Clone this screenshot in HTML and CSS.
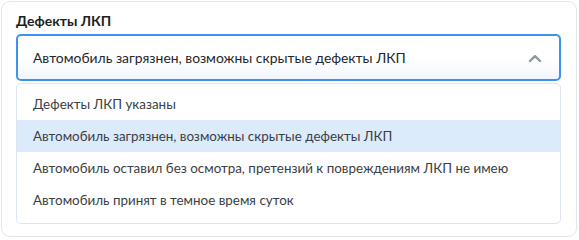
FILE: index.html
```html
<!DOCTYPE html>
<html lang="ru">
<head>
<meta charset="utf-8">
<link rel="stylesheet" href="styles.css">
</head>
<body>
<div class="card">
  <div class="label">Дефекты ЛКП</div>
  <div class="select">
    <span class="value">Автомобиль загрязнен, возможны скрытые дефекты ЛКП</span>
    <svg class="chev" width="14" height="9" viewBox="0 0 14 9"><path d="M2 7 L7 2.2 L12 7" fill="none" stroke="#8d96a5" stroke-width="2.4" stroke-linecap="round" stroke-linejoin="round"/></svg>
  </div>
  <ul class="list">
    <li class="opt">Дефекты ЛКП указаны</li>
    <li class="opt active">Автомобиль загрязнен, возможны скрытые дефекты ЛКП</li>
    <li class="opt">Автомобиль оставил без осмотра, претензий к повреждениям ЛКП не имею</li>
    <li class="opt">Автомобиль принят в темное время суток</li>
  </ul>
</div>
</body>
</html>
```
FILE: styles.css
```css
html, body { margin: 0; padding: 0; background: #fff; }
body { padding: 1px; font-family: "Lato", "Noto Sans", sans-serif; color: #2b2f36; }
.card {
  width: 545px;
  height: 205px;
  border: 1px solid #e3e5e8;
  border-radius: 9px;
  padding: 10px 15px 19px 14px;
}
.label {
  font-size: 14px;
  font-weight: 700;
  color: #1c1f24;
  line-height: 18px;
  height: 22px;
}
.select {
  height: 43px;
  border: 2px solid #3d92f0;
  border-radius: 5px;
  display: flex;
  align-items: center;
  justify-content: space-between;
  padding: 0 17px 0 15px;
  background: linear-gradient(#ffffff 55%, #f1f6fd);
}
.value { font-size: 13.9px; color: #23262c; }
.chev { display: block; margin-top: 1px; }
.list {
  list-style: none;
  margin: 2px 0 0 0;
  padding: 4px 0 7px 0;
  border: 1px solid #dbe4ef;
  border-radius: 5px;
  background: #fff;
}
.opt {
  height: 32px;
  line-height: 32px;
  padding-left: 16px;
  font-size: 13.4px;
  color: #3a3e45;
}
.opt.active { background: #dcebfb; }
```
